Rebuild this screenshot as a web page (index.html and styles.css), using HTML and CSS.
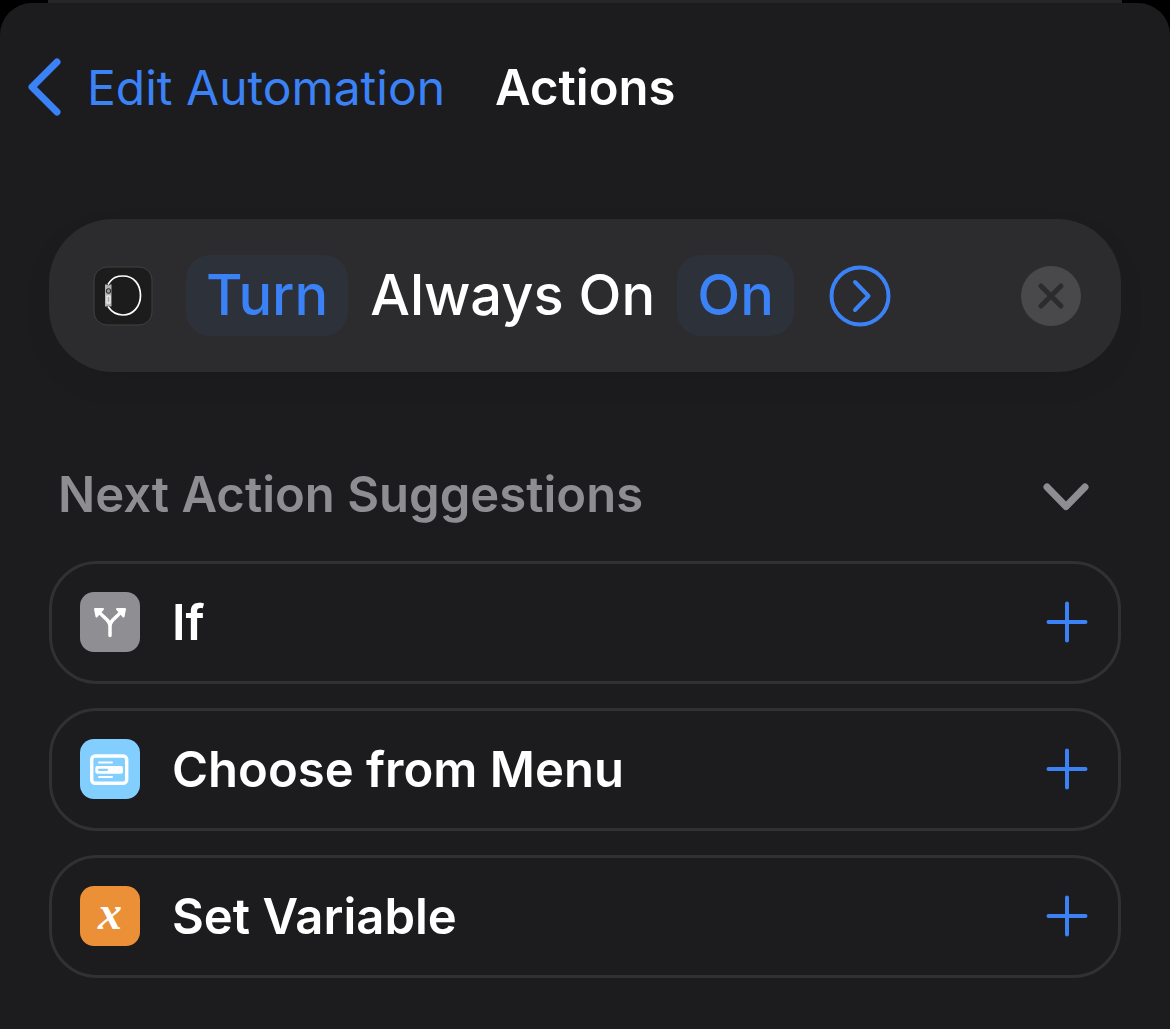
FILE: index.html
```
<!DOCTYPE html>
<html lang="en">
<head>
    <meta charset="UTF-8">
    <meta name="viewport" content="width=device-width, initial-scale=1.0">
    <title>Actions</title>
    <link rel="stylesheet" href="styles.css">
</head>
<body>
    <div class="sheet-behind"></div>
    <div class="sheet">
        <header class="navbar">
            <a class="back" href="#">
                <svg class="back-icon" width="36" height="60" viewBox="0 0 36 60" aria-hidden="true">
                    <path d="M30 4 L5 29 L30 54" />
                </svg>
                <span>Edit Automation</span>
            </a>
            <h1>Actions</h1>
        </header>

        <main>
            <section class="action-card">
                <svg class="app-icon" width="60" height="60" viewBox="0 0 60 60" aria-hidden="true">
                    <rect x="1" y="1" width="58" height="58" rx="13" fill="#1c1c1d" stroke="#404042" />
                    <path d="M15 18.500 C20 10.500 25 10 30 10 C41 10 47.500 18.500 47.500 29.500 C47.500 40.500 40 49 30 49 C24 49 19 46.500 15 40.500" fill="none" stroke="#fff" stroke-width="1.700" />
                    <path d="M12 18.500 H14 A2 2 0 0 0 17 18.500 H18.500 V40.500 H17 A2 2 0 0 0 14 40.500 H12 Z" fill="#b4b4b5" />
                    <circle cx="15.500" cy="25" r="2.300" fill="#999" stroke="#222" />
                    <rect x="14" y="30" width="3" height="7" fill="#aaa" stroke="#fff" />
                </svg>
                <button class="token token-first" type="button">Turn</button>
                <span class="action-text">Always On</span>
                <button class="token" type="button">On</button>
                <button class="icon-button disclosure" type="button" aria-label="Show more">
                    <svg width="62" height="62" viewBox="0 0 62 62" aria-hidden="true">
                        <circle cx="31" cy="31" r="28.500" />
                        <path d="M26 17 L39.500 31 L26 45" />
                    </svg>
                </button>
                <button class="icon-button remove" type="button" aria-label="Remove action">
                    <svg width="60" height="60" viewBox="0 0 60 60" aria-hidden="true">
                        <circle cx="30" cy="30" r="30" />
                        <path d="M20 20 L40 40 M40 20 L20 40" />
                    </svg>
                </button>
            </section>

            <section class="suggestions">
                <div class="suggestions-header">
                    <h2>Next Action Suggestions</h2>
                    <button class="icon-button collapse" type="button" aria-label="Collapse suggestions">
                        <svg width="46" height="32" viewBox="0 0 46 32" aria-hidden="true">
                            <path d="M4 8 L23 27.500 L42 8" />
                        </svg>
                    </button>
                </div>

                <ul class="suggestion-list">
                    <li>
                        <button class="suggestion" type="button">
                            <span class="badge badge-gray">
                                <svg width="60" height="60" viewBox="0 0 60 60" aria-hidden="true">
                                    <path d="M30 43.500 V34 C30 28 24 26 20 21 M30 34 C30 28 36 26 40 21" fill="none" stroke="#fff" stroke-width="3.500" stroke-linecap="round" />
                                    <path d="M15 17 L23 17 L16.500 24.500 Z M45 17 L37 17 L43.500 24.500 Z" fill="#fff" stroke="#fff" stroke-width="2" stroke-linejoin="round" />
                                </svg>
                            </span>
                            <span class="suggestion-name">If</span>
                            <svg class="plus" width="42" height="42" viewBox="0 0 42 42" aria-hidden="true">
                                <path d="M21 2.500 V39.500 M2.500 21 H39.500" />
                            </svg>
                        </button>
                    </li>
                    <li>
                        <button class="suggestion" type="button">
                            <span class="badge badge-blue">
                                <svg width="60" height="60" viewBox="0 0 60 60" aria-hidden="true">
                                    <rect x="11.700" y="17" width="35" height="27.300" rx="3.500" fill="none" stroke="#fff" stroke-width="3.400" />
                                    <rect x="15.300" y="27" width="27.700" height="7.700" rx="2" fill="#fff" />
                                    <path d="M19 23.500 H32 M19 38 H32" stroke="#fff" stroke-width="2" stroke-linecap="round" />
                                    <path d="M19 30.800 H27" stroke="#82cfff" stroke-width="2.200" stroke-linecap="round" />
                                </svg>
                            </span>
                            <span class="suggestion-name">Choose from Menu</span>
                            <svg class="plus" width="42" height="42" viewBox="0 0 42 42" aria-hidden="true">
                                <path d="M21 2.500 V39.500 M2.500 21 H39.500" />
                            </svg>
                        </button>
                    </li>
                    <li>
                        <button class="suggestion" type="button">
                            <span class="badge badge-orange">x</span>
                            <span class="suggestion-name">Set Variable</span>
                            <svg class="plus" width="42" height="42" viewBox="0 0 42 42" aria-hidden="true">
                                <path d="M21 2.500 V39.500 M2.500 21 H39.500" />
                            </svg>
                        </button>
                    </li>
                </ul>
            </section>
        </main>
    </div>
</body>
</html>
```

FILE: styles.css
```
* {
    box-sizing: border-box;
}
body {
    font-family: Inter, sans-serif;
    background-color: #000;
    color: #fff;
    margin: 0;
    min-height: 100vh;
    display: flex;
    flex-direction: column;
}
button {
    font: inherit;
    color: inherit;
    background: none;
    border: none;
    padding: 0;
    cursor: pointer;
}
svg {
    display: block;
    flex: none;
}
.sheet-behind {
    height: 3px;
    margin: 0 48px;
    background-color: #262627;
}
.sheet {
    flex: 1;
    background-color: #1c1c1e;
    border-radius: 32px 32px 0 0;
    padding-bottom: 48px;
}
.navbar {
    display: flex;
    align-items: center;
    gap: 50px;
    padding: 52px 27px 0;
    font-size: 49px;
    line-height: 65px;
}
.back {
    display: flex;
    align-items: center;
    gap: 24px;
    color: #3b82f7;
    font-size: 48px;
    text-decoration: none;
}
.back-icon {
    fill: none;
    stroke: #3b82f7;
    stroke-width: 7px;
    stroke-linecap: round;
    stroke-linejoin: round;
}
h1, h2 {
    font-size: inherit;
    font-weight: 600;
    margin: 0;
}
main {
    padding: 99px 49px 0;
}
.action-card {
    display: flex;
    align-items: center;
    padding: 36px 40px 36px 44px;
    background-color: #2c2c2e;
    border-radius: 64px;
    box-shadow: 0 12px 30px rgba(0, 0, 0, 0.06);
    font-size: 56px;
    font-weight: 500;
    line-height: 81px;
}
.token {
    padding: 0 20px;
    background-color: #2c313a;
    border-radius: 24px;
    color: #3b82f7;
}
.token-first {
    margin-left: 33px;
}
.action-text {
    margin: 0 22px;
}
.icon-button {
    flex: none;
}
.icon-button path {
    fill: none;
    stroke-linecap: round;
    stroke-linejoin: round;
}
.disclosure {
    margin-left: 35px;
}
.disclosure svg {
    fill: none;
    stroke: #3b82f7;
    stroke-width: 4px;
}
.remove {
    margin-left: auto;
}
.remove circle {
    fill: #49494b;
}
.remove path {
    stroke: #2c2c2e;
    stroke-width: 5px;
}
.suggestions {
    margin-top: 91px;
    font-size: 49px;
    font-weight: 600;
    line-height: 64px;
}
.suggestions-header {
    display: flex;
    align-items: center;
    justify-content: space-between;
    padding: 0 32px 0 9px;
    color: #8e8e92;
}
.collapse svg {
    stroke: #8e8e92;
    stroke-width: 7px;
}
.suggestion-list {
    display: flex;
    flex-direction: column;
    gap: 24px;
    list-style: none;
    margin: 34px 0 0;
    padding: 0;
}
.suggestion {
    display: flex;
    align-items: center;
    width: 100%;
    padding: 25px 30px 26px 28px;
    border: 3px solid #313133;
    border-radius: 48px;
    text-align: left;
}
.badge {
    flex: none;
    width: 60px;
    height: 60px;
    margin-right: 32px;
    border-radius: 14px;
}
.badge-gray {
    background-color: #8e8e93;
}
.badge-blue {
    background-color: #82cfff;
}
.badge-orange {
    background-color: #ec9038;
    font-family: "Liberation Serif", serif;
    font-size: 48px;
    font-style: italic;
    font-weight: 700;
    line-height: 54px;
    text-align: center;
}
.suggestion-name {
    flex: 1;
    padding-top: 2px;
}
.plus {
    stroke: #3b82f7;
    stroke-width: 4px;
    stroke-linecap: round;
}
```
